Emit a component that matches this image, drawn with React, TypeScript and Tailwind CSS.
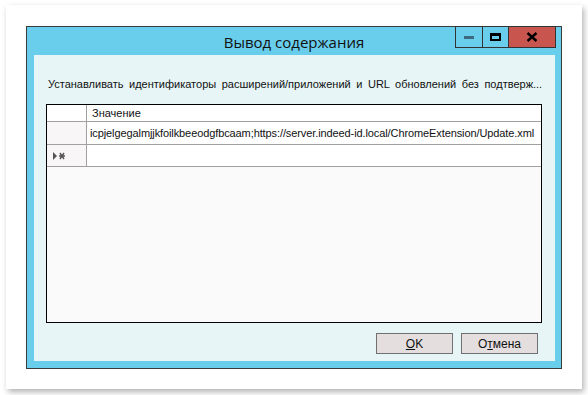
import React from "react";

export default function App() {
  const font = { fontFamily: '"Liberation Sans", Arial, sans-serif' };
  return (
    <div className="w-[588px] h-[395px] bg-white pt-[5px] pl-[6px]" style={font}>
      <div className="w-[576px] h-[384px] bg-white shadow-[2px_3px_6px_rgba(0,0,0,0.3)] pt-[21px] pl-[20px]">
        <div className="w-[536px] h-[343px] border border-[#3a3a3a] bg-[#69cdec] flex flex-col">
          {/* title bar */}
          <div className="h-[28px] flex relative">
            <div className="flex-1 flex items-center justify-center pt-[2px] text-[15px] text-[#111]" style={{ fontFamily: '"Open Sans", "Noto Sans", sans-serif' }}>
              Вывод содержания
            </div>
            <div className="absolute right-[5px] top-[-1px] flex h-[22px]">
              <div className="w-[28px] h-[22px] border border-[#333] flex items-center justify-center">
                <div className="w-[10px] h-[3px] bg-[#3d6a80] mt-[1px]" />
              </div>
              <div className="w-[26px] h-[22px] border border-l-0 border-[#333] flex items-center justify-center">
                <div className="w-[11px] h-[8px] border-2 border-t-[3px] border-black" />
              </div>
              <div className="w-[47px] h-[22px] border border-l-0 border-[#333] bg-[#c9554f] flex items-center justify-center">
                <svg width="12" height="10" viewBox="0 0 12 10">
                  <path d="M1.5 1 L10.5 9 M10.5 1 L1.5 9" stroke="#000" strokeWidth="2.4" />
                </svg>
              </div>
            </div>
          </div>
          {/* client area */}
          <div className="ml-[7px] w-[521px] h-[306px] bg-[#e7f5f6] flex flex-col">
            <div className="h-[22px]" />
            <div className="pl-[14px] text-[11px] text-[#111] leading-[14px] [word-spacing:2.5px] whitespace-nowrap">
              Устанавливать идентификаторы расширений/приложений и URL обновлений без подтверж...
            </div>
            <div className="h-[13px]" />
            <div className="ml-[12px] w-[496px] h-[219px] border border-black bg-[#fafafa] flex flex-col text-[11px] text-[#111]">
              <div className="flex h-[17px] border-b border-[#a0a0a0] bg-white">
                <div className="w-[40px] border-r border-[#a0a0a0]" />
                <div className="flex-1 pl-[5px] leading-[16px]">Значение</div>
              </div>
              <div className="flex h-[23px] border-b border-[#a0a0a0] bg-white">
                <div className="w-[40px] border-r border-[#a0a0a0] bg-[#f8f6f6]" />
                <div className="flex-1 pl-[3px] leading-[22px] tracking-[-0.1px] whitespace-nowrap">
                  icpjelgegalmjjkfoilkbeeodgfbcaam;https://server.indeed-id.local/ChromeExtension/Update.xml
                </div>
              </div>
              <div className="flex h-[22px] border-b border-[#a0a0a0] bg-white">
                <div className="w-[40px] border-r border-[#a0a0a0] bg-[#f8f6f6] flex items-center pl-[6px]">
                  <svg width="14" height="8" viewBox="0 0 14 8">
                    <path d="M0 0 L4 4 L0 8 Z" fill="#555" />
                    <path d="M7 1 L11 7 M11 1 L7 7 M6 4 L12 4" stroke="#555" strokeWidth="1.4" />
                  </svg>
                </div>
                <div className="flex-1" />
              </div>
            </div>
            <div className="flex justify-end gap-[8px] pr-[17px] mt-[10px]">
              <button className="w-[77px] h-[21px] border border-[#707070] bg-[#e4dede] text-[12px] text-[#111] flex items-center justify-center">
                <span><span className="underline">O</span>K</span>
              </button>
              <button className="w-[77px] h-[21px] border border-[#707070] bg-[#e4dede] text-[12px] text-[#111] flex items-center justify-center">
                <span>О<span className="underline">т</span>мена</span>
              </button>
            </div>
          </div>
        </div>
      </div>
    </div>
  );
}
